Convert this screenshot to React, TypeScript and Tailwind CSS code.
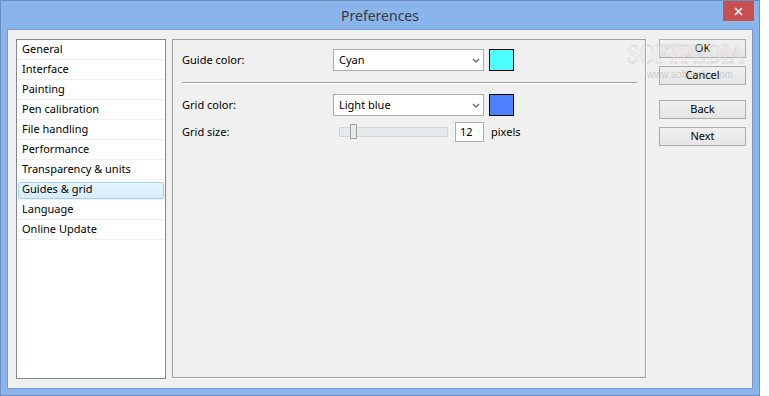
const items = [
  "General",
  "Interface",
  "Painting",
  "Pen calibration",
  "File handling",
  "Performance",
  "Transparency & units",
  "Guides & grid",
  "Language",
  "Online Update",
];

function Chevron() {
  return (
    <svg width="8" height="5" viewBox="0 0 8 5" className="shrink-0">
      <path d="M1 1 L4 4 L7 1" fill="none" stroke="#6b6b6b" strokeWidth="1.4" />
    </svg>
  );
}

function Select({ value }: { value: string }) {
  return (
    <div className="flex h-[22px] w-[151px] items-center justify-between border border-[#acacac] bg-white pl-[5px] pr-[3px]">
      <span>{value}</span>
      <Chevron />
    </div>
  );
}

function Button({ label }: { label: string }) {
  return (
    <div className="flex h-[19px] w-[87px] items-center justify-center border border-[#acacac] bg-gradient-to-b from-[#f0f0f0] to-[#e5e5e5]">
      {label}
    </div>
  );
}

export default function App() {
  return (
    <div className="h-[396px] w-[769px] bg-white font-['Noto_Sans',sans-serif] text-[11px] text-black">
      <div className="relative flex h-[396px] w-[760px] flex-col border border-[#6c8dc0] bg-[#8ab4ec]">
        {/* title bar */}
        <div className="relative flex h-[28px] items-center justify-center text-[14px] text-[#3a3a3a]">
          Preferences
          <div className="absolute right-[5px] top-0 flex h-[20px] w-[31px] items-center justify-center bg-[#c75050]">
            <svg width="9" height="9" viewBox="0 0 9 9">
              <path d="M1 1 L8 8 M8 1 L1 8" stroke="white" strokeWidth="1.6" />
            </svg>
          </div>
        </div>

        {/* client area */}
        <div className="mx-[6px] flex h-[360px] border border-[#7b9bcc] bg-[#f0f0f0] pl-[8px] pt-[9px]">
          {/* category list */}
          <div className="h-[340px] w-[150px] border border-[#828790] bg-white">
            {items.map((it) => (
              <div
                key={it}
                className="relative flex h-[20px] items-center border-b border-[#f0f0f0] pl-[5px]"
              >
                {it === "Guides & grid" && (
                  <div className="absolute inset-x-[1px] bottom-0 top-[2px] rounded-[2px] border border-[#9fd3f6] bg-gradient-to-b from-[#e6f4fd] to-[#d5ecfb]" />
                )}
                <span className="relative">{it}</span>
              </div>
            ))}
          </div>

          {/* settings group */}
          <div className="ml-[6px] h-[340px] w-[475px] border-b border-r border-white">
            <div className="h-[339px] w-[474px] border border-[#a0a0a0] pl-[9px] pr-[9px] pt-[9px]">
              <div className="flex items-center">
                <div className="w-[151px]">Guide color:</div>
                <Select value="Cyan" />
                <div className="ml-[5px] h-[22px] w-[25px] border border-black bg-[#4dffff]" />
              </div>
              <div className="mt-[11px] h-[2px] w-[455px] border-t border-[#a0a0a0] border-b-white bg-white" />
              <div className="mt-[10px] flex items-center">
                <div className="w-[151px]">Grid color:</div>
                <Select value="Light blue" />
                <div className="ml-[5px] h-[22px] w-[25px] border border-black bg-[#4d80ff]" />
              </div>
              <div className="mt-[6px] flex items-center">
                <div className="w-[157px]">Grid size:</div>
                <div className="relative h-[10px] w-[109px] border border-[#d6d6d6] bg-[#e7eaea]">
                  <div className="absolute left-[10px] top-[-4px] h-[15px] w-[7px] border border-[#a3a3a3] bg-[#e9e9e9]" />
                </div>
                <div className="ml-[7px] flex h-[20px] w-[29px] items-center border border-[#acacac] bg-white pl-[4px]">
                  12
                </div>
                <span className="ml-[7px]">pixels</span>
              </div>
            </div>
          </div>

          {/* buttons */}
          <div className="relative ml-[12px] flex flex-col">
            <Button label="OK" />
            <div className="mt-[8px]">
              <Button label="Cancel" />
            </div>
            <div className="mt-[15px]">
              <Button label="Back" />
            </div>
            <div className="mt-[8px]">
              <Button label="Next" />
            </div>
            {/* watermark */}
            <div className="pointer-events-none absolute left-[-32px] top-[1px] origin-left scale-x-[0.78] whitespace-nowrap font-['Liberation_Serif',serif] text-[28px] leading-none text-[rgba(255,255,255,0.35)] [-webkit-text-stroke:1px_rgba(200,200,200,0.5)]">
              SOFTPEDIA
            </div>
            <div className="pointer-events-none absolute left-[-12px] top-[31px] whitespace-nowrap font-['Liberation_Sans_Narrow','Liberation_Sans',sans-serif] text-[10px] leading-none text-[rgba(150,150,150,0.4)]">
              www.softpedia.com
            </div>
          </div>
        </div>
      </div>
    </div>
  );
}
